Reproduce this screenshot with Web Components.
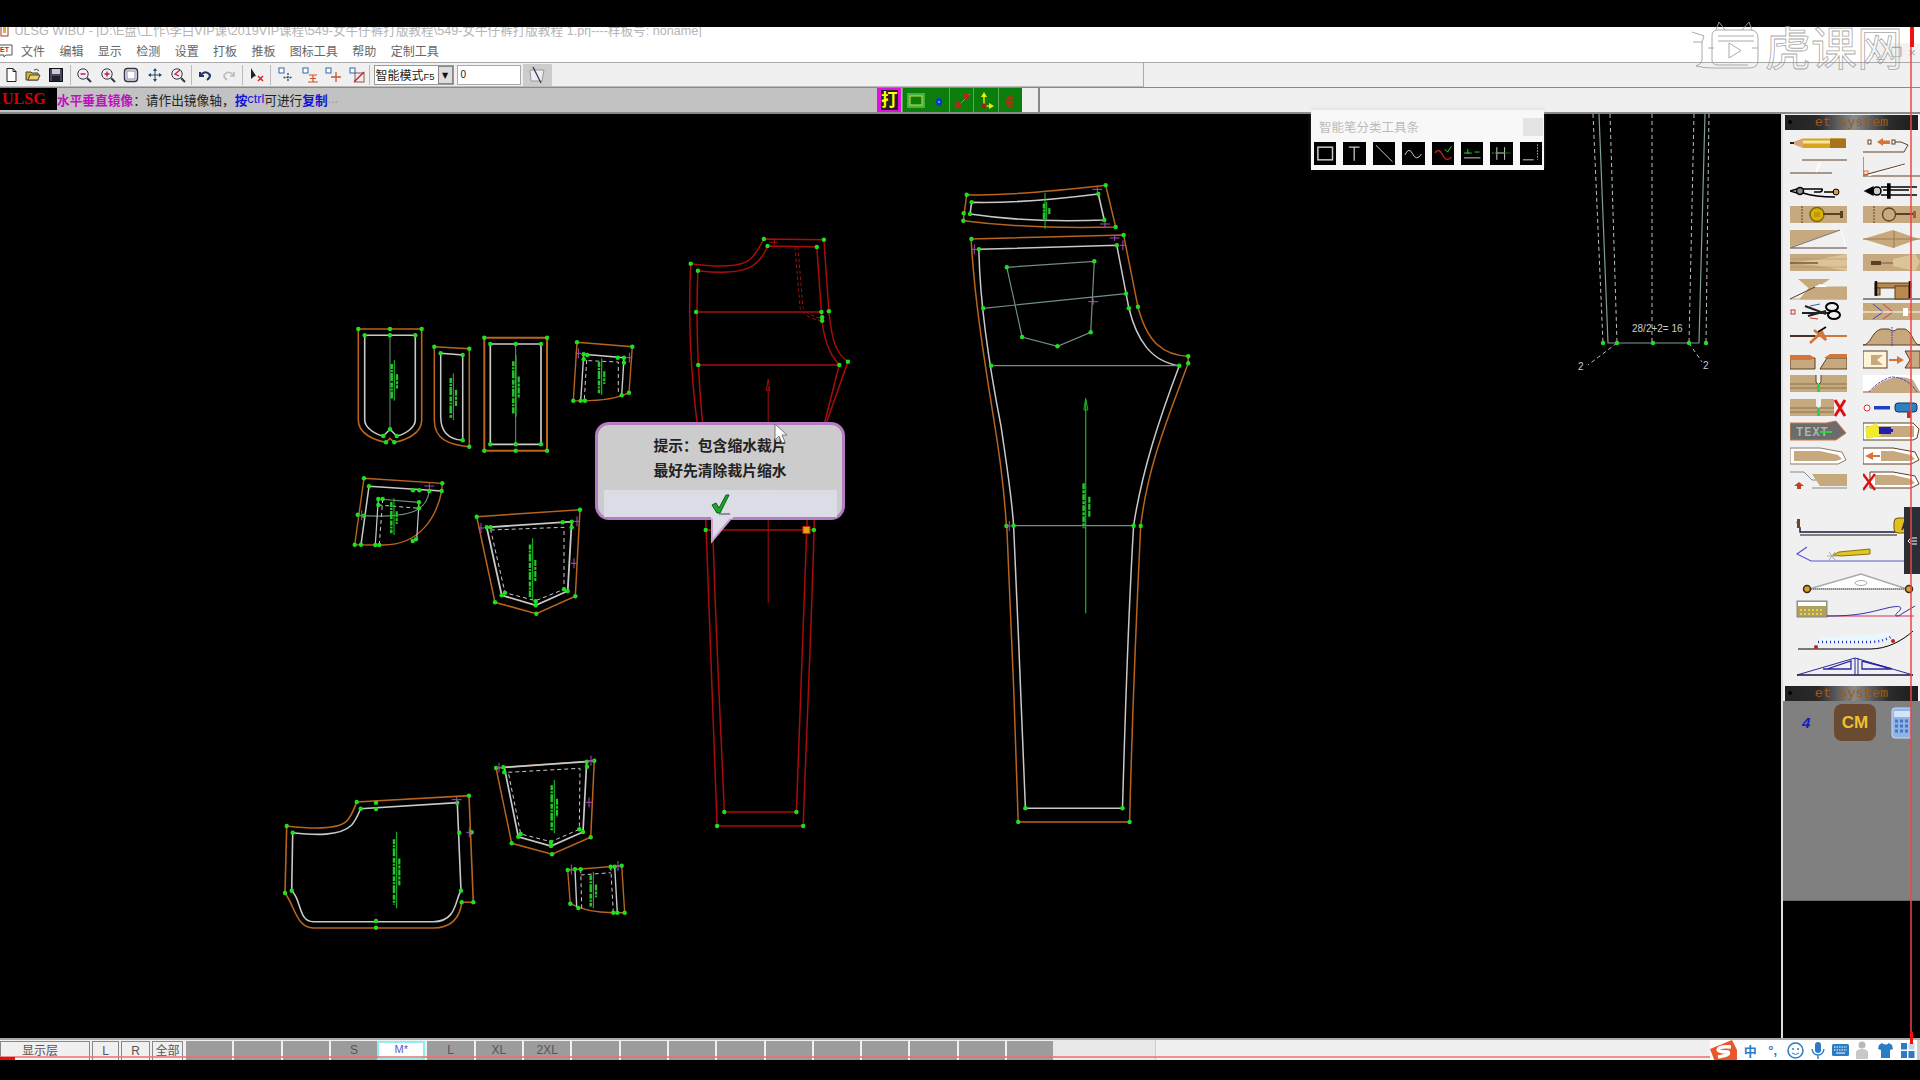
<!DOCTYPE html>
<html lang="zh"><head><meta charset="utf-8"><title>ULSG</title>
<style>html,body{margin:0;height:100%;background:#000}body{font-family:"Liberation Sans","Noto Sans CJK SC",sans-serif;overflow:hidden}</style>
</head><body>
<ulsg-app></ulsg-app>
<script>
const FONT='"Liberation Sans","Noto Sans CJK SC",sans-serif';
function def(name,render){customElements.define(name,class extends HTMLElement{connectedCallback(){if(this.shadowRoot)return;this.attachShadow({mode:'open'}).innerHTML=render(this);}});}

/* ---------- CAD drawing ---------- */
const view=(ox,oy,sx,sy=sx)=>{const f=(x,y)=>[ox+x/sx,oy+y/sy];
  const v=d=>d.replace(/(-?\d+\.?\d*) (-?\d+\.?\d*)/g,(m,x,y)=>{const p=f(+x,+y);return p[0].toFixed(1)+' '+p[1].toFixed(1)});
  v.pt=f;return v;};
const BROWN='#b8641c',WHITE='#c9c9c9',TEAL='#6f8f85',RED='#a80c0c',GR='#1fe01f',GRD='#1fae2a',MAG='#a84cc0';
function P(v,d,c,w=1.4,dash=''){return `<path d="${v(d)}" fill="none" stroke="${c}" stroke-width="${w}" ${dash?`stroke-dasharray="${dash}"`:''}/>`;}
function dots(v,a,c=GR){let s='';for(let i=0;i<a.length;i+=2){const p=v.pt(a[i],a[i+1]);s+=`<circle cx="${p[0].toFixed(1)}" cy="${p[1].toFixed(1)}" r="2.2" fill="${c}"/>`;}return s;}
function grain(v,x,y1,y2,c='#22c82a'){return P(v,`M${x} ${y1} L${x} ${y2}`,c,1)+P(v,`M${x-8} ${y1+(y2-y1)*.1} L${x-8} ${y2-(y2-y1)*.05}`,c,2.5,'5 1 2 1 8 1.5')+P(v,`M${x+8} ${y1+(y2-y1)*.35} L${x+8} ${y2-(y2-y1)*.3}`,c,2.2,'6 1 3 1');}
function tick(v,x,y,o='v',c=MAG){const p=v.pt(x,y),X=p[0],Y=p[1];return o==='v'?`<path d="M${X-3} ${Y}H${X+3}M${X} ${Y-5}V${Y+5}" stroke="${c}" fill="none"/>`:`<path d="M${X} ${Y-3}V${Y+3}M${X-5} ${Y}H${X+5}" stroke="${c}" fill="none"/>`;}
function cad(){
 let s='';
 const a=view(340,310,3),b=view(270,740,3),c=view(950,170,3),u=view(660,220,2.8,3),l=view(680,500,2.8,3);
 const D='4 3';
 // p1
 s+=P(a,'M55 57 L245 57 L245 330 C245 370 200 390 163 397 L150 385 L138 397 C100 390 55 370 55 330 Z',BROWN,1.6);
 s+=P(a,'M74 76 L226 76 L226 330 C226 350 200 372 170 378 L150 358 L130 378 C100 372 74 350 74 330 Z',WHITE,1.6);
 s+=P(a,'M150 76 L150 358',TEAL,1)+grain(a,163,150,272);
 s+=dots(a,[55,57,150,57,245,57,74,76,150,76,226,76,150,358,130,378,170,378,138,397,163,397]);
 // p2
 s+=P(a,'M283 110 L388 116 L388 410 C330 405 283 390 283 330 Z',BROWN,1.5);
 s+=P(a,'M302 130 L368 135 L368 391 C330 388 302 370 302 320 Z',WHITE,1.5);
 s+=grain(a,340,190,330)+dots(a,[283,110,388,116,388,410,302,130,368,135,368,391]);
 // p3
 s+=P(a,'M433 83 L621 83 L621 422 L433 422 Z',BROWN,2)+P(a,'M451 102 L603 102 L603 403 L451 403 Z',WHITE,1.7)+P(a,'M527 102 L527 403',TEAL,1)+grain(a,528,135,320);
 s+=dots(a,[433,83,621,83,433,422,527,422,621,422,451,102,527,102,603,102,451,403,527,403,603,403]);
 // p4
 s+=P(a,'M711 97 L877 110 L867 248 C840 262 790 275 700 272 Z',BROWN,1.4)+P(a,'M731 133 L852 143 L845 256 M722 272 L731 133',WHITE,1.4);
 s+=P(a,'M745 152 L835 156 L835 250 M740 150 L733 270',WHITE,1,D)+grain(a,785,145,255);
 s+=dots(a,[711,97,877,110,867,248,700,272,722,272,735,272,731,133,742,135,833,143,852,143,852,158,845,256,731,148])+tick(a,715,130,'v')+tick(a,868,143,'v');
 // p5
 s+=P(a,'M72 505 L307 520 L305 543 C290 620 240 705 130 705 L44 704 Z',BROWN,1.4)+P(a,'M87 529 L305 543 M87 529 L63 704',WHITE,1.5);
 s+=P(a,'M268 543 C260 600 220 625 60 617',TEAL,1.2)+P(a,'M115 567 L237 577',TEAL,1.2)+P(a,'M115 585 L237 595',WHITE,1,D)+P(a,'M115 567 L106 705 M237 577 L230 690',WHITE,1.2)+P(a,'M128 567 L118 705',WHITE,1,D);
 s+=grain(a,162,565,675)+dots(a,[72,505,307,520,87,529,219,541,238,541,305,543,268,543,115,567,128,567,237,577,237,595,115,585,53,614,72,617,44,704,63,704,106,705,118,705,218,693,228,688])+tick(a,65,616,'v')+tick(a,268,528,'h');
 // p6
 s+=P(a,'M410 620 L720 599 L706 859 L589 911 L465 877 Z',BROWN,1.5)+P(a,'M440 652 L695 635 L683 843 L587 886 L485 856 Z',WHITE,1.8)+P(a,'M452 660 L672 652 L672 838 L587 872 L495 848 Z',WHITE,1,D);
 s+=grain(a,578,685,870)+dots(a,[410,620,720,599,706,859,589,911,465,877,440,652,452,652,668,637,695,635,695,652,683,843,672,838,587,886,587,874,485,856,495,848])+tick(a,423,654,'v')+tick(a,711,634,'v')+tick(a,702,760,'v');
 // p7
 s+=P(b,'M50 258 C120 266 200 270 228 245 C245 230 252 205 260 186 L597 167 L610 487 L575 487 C570 530 550 563 490 564 L130 564 C80 564 75 500 45 459 Z',BROWN,1.6);
 s+=P(b,'M68 278 C130 285 210 290 245 255 C258 240 265 222 272 206 L562 188 L573 452 C555 480 560 545 490 545 L130 545 C85 545 95 480 65 452 Z',WHITE,1.6);
 s+=grain(b,380,275,505)+dots(b,[50,258,68,278,260,186,272,206,318,188,318,207,597,167,562,188,568,278,605,277,573,452,575,487,610,487,45,459,65,452,318,543,318,563])+tick(b,560,179,'h')+tick(b,598,277,'v');
 // p8
 s+=P(b,'M678 84 L973 62 L962 292 L846 343 L725 310 Z',BROWN,1.5)+P(b,'M703 82 L950 65 L939 276 L843 318 L745 290 Z',WHITE,1.7)+P(b,'M715 97 L930 85 L928 268 L843 305 L752 282 Z',WHITE,1,D);
 s+=grain(b,853,120,280)+dots(b,[678,84,973,62,962,292,846,343,725,310,700,82,703,97,950,65,951,80,939,276,928,268,843,318,843,306,745,290,752,282])+tick(b,687,83,'v')+tick(b,963,62,'v')+tick(b,957,187,'v');
 // p9
 s+=P(b,'M893 390 L1055 377 L1064 518 L1030 518 C980 518 935 510 901 491 Z',BROWN,1.4)+P(b,'M915 388 L920 500 M1034 380 L1042 518',WHITE,1.4)+P(b,'M932 388 L935 505 M1022 380 L1030 518 M932 405 L1022 398',WHITE,1,D);
 s+=grain(b,970,395,505)+dots(b,[893,390,915,388,932,388,1022,380,1034,380,1055,377,1064,518,1042,518,1030,518,901,491,925,504])+tick(b,904,389,'v')+tick(b,1044,378,'v');
 // waistband
 s+=P(c,'M50 74 C150 78 300 65 467 46 L497 171 C350 175 180 170 40 152 Z',BROWN,1.5)+P(c,'M65 97 C180 100 320 88 445 72 L463 150 C330 155 180 150 60 132 Z',WHITE,1.6);
 s+=P(c,'M285 68 L285 176','#22c82a',1)+grain(c,290,95,150)+dots(c,[50,74,467,46,497,171,40,152,41,130,65,97,445,72,463,150,60,132])+tick(c,442,58,'h')+tick(c,465,162,'h');
 // front leg
 s+=P(u,'M871 57 L1298 45 L1338 260 C1365 370 1410 405 1479 409 L1479 430 C1420 600 1365 740 1346 918',BROWN,1.5);
 s+=P(u,'M871 57 C880 230 905 400 935 600 C955 730 965 830 970 918',BROWN,1.5);
 s+=P(l,'M1290 78 C1280 300 1265 700 1259 966 L947 966 C940 700 925 300 915 78',BROWN,1.5);
 s+=P(u,'M893 88 L1279 76 L1313 265 C1335 360 1375 425 1454 437 C1400 590 1350 750 1326 917',WHITE,1.5);
 s+=P(u,'M893 88 C895 240 915 400 955 620 C970 730 985 830 990 917',WHITE,1.5);
 s+=P(l,'M1270 77 C1255 350 1245 700 1239 925 L967 925 C960 700 945 350 934 77',WHITE,1.5);
 s+=P(u,'M927 437 L1454 437 M905 265 L1305 221 M990 917 L1326 917 M971 142 L1216 124 L1206 337 L1113 379 L1014 351 Z',TEAL,1.2);
 s+=P(u,'M1192 540 L1192 1180',GRD,1.2)+P(u,'M1187 570 L1192 535 L1198 570 Z',GRD,1)+P(u,'M1186 790 L1186 925','#22c82a',2.5,'6 1 3 1')+P(u,'M1202 830 L1202 890','#22c82a',2.2,'6 1');
 s+=dots(u,[872,57,1298,45,893,88,1279,76,971,142,1216,124,1206,337,1113,379,1014,351,905,265,1305,221,1313,265,1338,260,1479,409,1479,430,1454,437,927,437,970,918,990,917,1326,917,1346,918]);
 s+=dots(l,[967,925,1239,925,947,966,1259,966]);
 s+=tick(u,880,88,'v')+tick(u,1273,54,'h')+tick(u,1296,76,'v')+tick(u,978,918,'v')+tick(u,1213,245,'h');
 // back leg
 s+=P(u,'M86 131 C150 140 230 145 255 115 C275 95 280 75 291 57 L459 59 L473 274 C480 350 490 400 526 425 L462 620',RED,1.5);
 s+=P(u,'M86 131 C78 300 85 450 105 620',RED,1.5);
 s+=P(l,'M376 60 C368 400 352 750 345 978 L104 978 C95 750 85 400 72 60',RED,1.5);
 s+=P(u,'M106 152 C170 160 240 160 268 130 C285 115 295 95 301 78 L439 81 L452 276 C455 340 470 400 502 434 L458 620',RED,1.5);
 s+=P(u,'M106 152 C100 300 105 450 120 620',RED,1.5);
 s+=P(l,'M356 60 C345 400 335 700 326 936 L124 936 C115 700 100 400 91 60',RED,1.5);
 s+=P(u,'M101 276 L452 276 M107 435 L502 435 M128 930 L431 930',RED,1.3);
 s+=P(u,'M303 500 L303 1150',RED,1)+P(u,'M298 512 L303 478 L308 512 Z',RED,1);
 s+=P(u,'M378 80 L392 262 C396 280 420 298 452 302 M386 80 L400 262 C404 275 425 290 452 295',RED,1,'3.5 2.5');
 s+=P(u,'M305 67 L330 67 M320 60 L320 74',RED,1);
 s+=dots(u,[86,131,106,152,291,57,301,78,459,59,439,81,101,276,452,276,473,274,454,292,454,302,107,435,502,435,526,425,128,930,431,930]);
 s+=dots(l,[124,936,326,936,104,978,345,978]);
 const q=u.pt(410,930);s+=`<rect x="${q[0]-3.5}" y="${q[1]-3.5}" width="7" height="7" fill="#e8a010" stroke="#c03010"/>`;
 // partial piece top right
 const T='#7f9f97',W='#b8c0bc';
 const id=d=>d;id.pt=(x,y)=>[x,y];
 s+=P(id,'M1599 114 L1608 343 L1699 343 L1705 114',T,1.2);
 s+=P(id,'M1593 114 L1603 343 M1610 114 L1617 343 M1652 114 L1652 343 M1694 114 L1689 343 M1709 114 L1706 343 M1617 343 L1588 365 M1689 343 L1702 362',W,1,'4 3');
 s+=dots(id,[1603,343,1617,343,1653,343,1689,343,1706,343]);
 return s;
}
def('cad-canvas',()=>`<style>:host{display:block;position:relative;flex:1;min-width:0;background:#000}svg{position:absolute;left:0;top:-114px;width:1781px;height:1080px;overflow:hidden}
text{font:10px "Liberation Sans",sans-serif;fill:#ccc}</style>
<svg viewBox="0 0 1781 1080">${cad()}<text x="1632" y="332">28/2+2= 16</text><text x="1578" y="370">2</text><text x="1703" y="369">2</text></svg><slot></slot>`);

/* ---------- small pieces ---------- */
def('title-bar',()=>`<style>:host{display:flex;height:10px;background:#fff;overflow:hidden;align-items:flex-start}
svg{flex:none;margin-top:-3px}span{font:12.6px/13px ${FONT};color:#b4b4b4;margin:-2px 0 0 5.5px;white-space:nowrap}</style>
<svg width="9" height="13" viewBox="0 0 9 13"><rect x="1" y="0" width="7" height="12" fill="#fff" stroke="#a33"/><rect x="3" y="3" width="3" height="6" fill="#e0b020"/></svg>
<span>ULSG WIBU - [D:\\E盘\\工作\\李白VIP课\\2019VIP课程\\549-女牛仔裤打版教程\\549-女牛仔裤打版教程 1.prj----样板号: noname]</span>`);

def('menu-bar',()=>`<style>:host{display:flex;height:23px;padding-top:2px;align-items:center;background:#fff;border-bottom:1px solid #aaa;font:12px ${FONT};color:#666;position:relative}
svg{flex:none;margin-right:8px}.m{display:flex;gap:14.4px}
.w{position:absolute;right:0;top:6px;display:flex}.w b{width:16px;height:19px;font:400 13px/19px "Liberation Sans","DejaVu Sans",sans-serif;text-align:center;color:#aaa;background:#f2f2f2;overflow:hidden}</style>
<svg width="13" height="14" viewBox="0 0 13 14"><path d="M0 1H12V11H6L4 13V11H0" fill="#fff" stroke="#555"/><text x="0" y="8" font-size="7" font-weight="700" fill="#c22" font-family="Liberation Sans">ET</text></svg>
<div class="m"><span>文件</span><span>编辑</span><span>显示</span><span>检测</span><span>设置</span><span>打板</span><span>推板</span><span>图标工具</span><span>帮助</span><span>定制工具</span></div>
<div class="w"><b>_</b><b>❐</b><b>×</b></div>`);

const tb={
 new:'<path d="M4 1.5H10L13 4.5V14.5H4Z" fill="#fff" stroke="#222"/><path d="M10 1.5V4.5H13" fill="none" stroke="#222"/>',
 open:'<path d="M1 5H6L7 6H13V13H1Z" fill="#d4b040" stroke="#443"/><path d="M3 13L5 8H15L13 13Z" fill="#e8d070" stroke="#443"/><path d="M9 3Q12 1 14 4" stroke="#443" fill="none"/>',
 save:'<rect x="1.5" y="1.5" width="13" height="13" fill="#446" stroke="#111"/><rect x="4" y="2" width="8" height="5" fill="#ccc"/><rect x="4" y="9" width="8" height="5" fill="#222"/>',
 zo:'<circle cx="7" cy="7" r="5.2" fill="#eef" stroke="#334"/><path d="M11 11L15 15" stroke="#334" stroke-width="2"/><path d="M4.5 7H9.5" stroke="#c22" stroke-width="1.5"/>',
 zi:'<circle cx="7" cy="7" r="5.2" fill="#eef" stroke="#334"/><path d="M11 11L15 15" stroke="#334" stroke-width="2"/><path d="M4.5 7H9.5M7 4.5V9.5" stroke="#c22" stroke-width="1.5"/>',
 fit:'<rect x="1.5" y="1.5" width="13" height="13" rx="3" fill="#eef" stroke="#334" stroke-width="1.4"/><rect x="4" y="4" width="8" height="8" fill="#fff" stroke="#88a"/>',
 pan:'<path d="M8 1L10 4H6ZM8 15L6 12H10ZM1 8L4 6V10ZM15 8L12 10V6Z" fill="#246"/><path d="M8 4V12M4 8H12" stroke="#246"/>',
 zp:'<circle cx="7" cy="7" r="5.2" fill="#eef" stroke="#334"/><path d="M11 11L15 15" stroke="#334" stroke-width="2"/><path d="M10 3L5 7L9 9" stroke="#c22" stroke-width="1.3" fill="none"/>',
 undo:'<path d="M3 5V9H7M3 9Q8 2 13 8Q13 11 10 13" stroke="#236" stroke-width="2" fill="none"/>',
 redo:'<path d="M13 5V9H9M13 9Q8 2 3 8Q3 11 6 13" stroke="#bbb" stroke-width="1.6" fill="none"/>',
 cur:'<path d="M2 1V12L5 9.5L7 9Z" fill="#222"/><path d="M9 9L14 14M14 9L9 14" stroke="#d22" stroke-width="1.5"/>',
 a:'<rect x="1" y="1" width="5" height="5" fill="#fff" stroke="#36a"/><path d="M10 6V15M5.5 10.5H14.5" stroke="#246" stroke-width="1.3" stroke-dasharray="2 1"/>',
 b:'<rect x="1" y="1" width="5" height="5" fill="#fff" stroke="#36a"/><path d="M7 8H15M11 8V15M8 11.5H14M6 15H16" stroke="#c52" stroke-width="1.2"/>',
 c:'<rect x="1" y="1" width="5" height="5" fill="#fff" stroke="#36a"/><path d="M11 5V15M6 10H16" stroke="#c52" stroke-width="1.3"/>',
 d:'<rect x="1" y="1" width="5" height="5" fill="#fff" stroke="#36a"/><rect x="6" y="6" width="9" height="9" fill="#eee" stroke="#855"/><path d="M5 15L15 5" stroke="#c22" stroke-width="1.4"/>'};
const ti=(k,w=23.6)=>`<i style="width:${w}px"><svg width="16" height="16" viewBox="0 0 16 16">${tb[k]}</svg></i>`;
def('tool-bar',()=>`<style>:host{display:flex;height:24px;background:#f0f0f0;position:relative}
.bar{display:flex;align-items:center;width:1144px;box-sizing:border-box;border-right:1px solid #aaa;border-bottom:1px solid #bbb;font:12px ${FONT}}
i{display:flex;justify-content:center;flex:none}u{width:1px;height:20px;background:#bbb;flex:none;margin:0 1px 0 1px}
.cb{width:80px;height:20px;margin-left:3px;box-sizing:border-box;background:#fff;border:1px solid #999;display:flex;align-items:center;justify-content:space-between;font-size:12px;color:#222;padding-left:1px;white-space:nowrap;overflow:hidden}
.cb small{font-size:9.5px}.cb b{width:15px;height:18px;background:#ddd;color:#111;font:8px/18px "DejaVu Sans";text-align:center;flex:none;border:1px solid #888;box-sizing:border-box}
.in{width:64px;height:20px;box-sizing:border-box;margin-left:3px;background:#fff;border:1px solid #aaa;font:10px/18px "Liberation Sans";padding-left:3px;color:#222}
.bt{width:29px;height:22px;background:#ccc;display:flex;align-items:center;justify-content:center;margin-left:2px}</style>
<div class="bar">${ti('new',21)}${ti('open')}${ti('save')}<u style="margin-left:2px;margin-right:1px"></u>${ti('zo')}${ti('zi')}${ti('fit')}${ti('pan')}${ti('zp')}<u></u>${ti('undo',24)}${ti('redo',24)}<u></u>${ti('cur',25)}<u style="margin-right:3px"></u>${ti('a')}${ti('b')}${ti('c')}${ti('d')}<u style="margin-left:0"></u>
<div class="cb"><span>智能模式<small>F5</small></span><b>▼</b></div><div class="in">0</div>
<div class="bt"><svg width="20" height="18" viewBox="0 0 20 18"><path d="M3 4H17L15 15H4Z" fill="#eee" stroke="#999"/><path d="M6 1L14 17" stroke="#336" stroke-width="1.2"/></svg></div></div>`);

def('status-row',()=>`<style>:host{display:flex;height:27px;background:#f0f0f0;border-bottom:2px solid #8a8a8a;box-sizing:border-box;border-top:1px solid #8a8a8a;position:relative}
.l{width:877px;background:#c2c2c2;display:flex;align-items:center;font:12.7px ${FONT};color:#222;white-space:nowrap;padding-bottom:2px;box-sizing:border-box}
.logo{width:57px;height:22px;background:#000;color:#d00;font:700 16px/22px "Liberation Serif",serif;box-sizing:border-box;padding-left:2px;flex:none}
.mg{color:#c010c0;font-weight:700}.bl{color:#1414d8;font-weight:700}.bn{color:#1414d8}.gy{color:#999}
.g{display:block;height:24px;flex:none;background:#0a7d0a;border-left:1px solid #5aa85a;box-sizing:border-box}
.end{width:16px;background:#eee;border-right:2px solid #888;border-top:1px solid #888;margin-top:-1px}</style>
<div class="l"><div class="logo">ULSG</div><span class="mg">水平垂直镜像</span><span>\uFF1A请作出镜像轴\uFF0C</span><span class="bl">按</span><span class="bn">ctrl</span><span>可进行</span><span class="bl">复制</span><span class="gy">...</span></div>
<span style="display:block;width:24.5px;height:24px;flex:none"><svg width="24.5" height="24" viewBox="0 0 24.5 24"><rect width="24.5" height="24" fill="#e010e0"/><rect x="4" y="2" width="17" height="20" fill="#222"/><text x="4" y="18" font-size="16.5" font-weight="700" fill="#ff0" font-family="Noto Sans CJK SC">打</text></svg></span>
<span class="g" style="width:47px"><svg width="47" height="24"><rect x="4" y="5" width="18" height="15" fill="#44b044"/><rect x="7" y="8" width="12" height="9" fill="#0a7d0a" stroke="#c8e040"/><ellipse cx="36" cy="14" rx="3" ry="4" fill="#1030e0"/><circle cx="36" cy="14" r="1" fill="#6cf"/></svg></span>
<span class="g" style="width:24.5px"><svg width="24" height="24"><path d="M6 20L20 6" stroke="#30c080"/><circle cx="16" cy="8" r="3" fill="#c02020"/><circle cx="8" cy="17" r="3" fill="#c02020"/></svg></span>
<span class="g" style="width:24.5px"><svg width="24" height="24"><path d="M10 8V18H18" stroke="#dd0" stroke-width="1.5" fill="none"/><path d="M10 4L7 9H13ZM20 18L15 15V21Z" fill="#ee0"/><circle cx="10" cy="18" r="2.5" fill="#a02020"/></svg></span>
<span class="g" style="width:24.5px"><svg width="24" height="24"><ellipse cx="11" cy="14" rx="4" ry="6" fill="#b03010"/><path d="M8 12H15M8 16H15" stroke="#0a7d0a"/></svg></span>
<div class="end"></div>`);

/* ---------- side panel icons ---------- */
const TAN='#c6a97e',DK='#5c3f22',OR='#d4763a',RD='#c02020';
const band=(extra='')=>`<rect x="0" y="3" width="57" height="17" fill="${TAN}"/>${extra}`;
const ic={
 pencil:`<path d="M1 12L13 7.5H54Q58 12 54 17H13Z" fill="#d8a41e"/><rect x="13" y="9.5" width="27" height="3" fill="#f8e69a"/><rect x="40" y="7.5" width="16" height="9.5" fill="#a8741a"/><path d="M1 12L13 7.5V17Z" fill="#d8a478"/><rect x="0" y="11" width="4" height="2" fill="#222"/>`,
 seam:`<rect x="5" y="9" width="3" height="4" fill="#fff" stroke="${DK}"/><path d="M14 11L20 7V9.5H27V13H20V15Z" fill="${OR}"/><rect x="29" y="9" width="3" height="4" fill="#fff" stroke="${DK}"/><path d="M32 11H38L45 14L41 21H0" fill="none" stroke="${DK}"/>`,
 lines:`<path d="M12 5H57M0 18H42" stroke="${DK}" stroke-width="1.2"/><path d="M26 17L30 8" stroke="#fff" stroke-width="2"/>`,
 angle:`<path d="M0 2V21H57" fill="none" stroke="${DK}"/><path d="M1 20L42 9" stroke="${DK}"/><rect x="1" y="16" width="4" height="4" fill="none" stroke="${OR}"/><path d="M5 21L42 10" stroke="#fff"/>`,
 compa:`<circle cx="10" cy="12" r="3.5" fill="#888" stroke="#000" stroke-width="1.5"/><circle cx="46" cy="13" r="3" fill="#d4a040" stroke="#000"/><path d="M0 12L7 10M0 12L7 14M13 10H32Q33 12 30 13H24M13 14Q25 18 45 18M34 13H44" stroke="#000" stroke-width="1.6" fill="none"/>`,
 compb:`<circle cx="14" cy="12" r="4" fill="#ccc" stroke="#000" stroke-width="1.6"/><path d="M2 12L10 8V16ZM18 8H54M18 16H54M20 11H46M24 19H27V5H24" stroke="#000" stroke-width="1.3" fill="#000"/>`,
 btnA:band(`<path d="M12 3V20" stroke="${DK}" stroke-dasharray="2 1"/><circle cx="27" cy="11.5" r="7" fill="#d8b400" stroke="#7a6a10" stroke-width="1.5"/><rect x="24" y="9" width="6" height="5" fill="#c09808"/><path d="M33 11H52" stroke="${DK}" stroke-width="2"/><rect x="50" y="8" width="3" height="7" fill="${DK}"/>`),
 btnB:band(`<path d="M11 3V20" stroke="${DK}" stroke-dasharray="2 1"/><circle cx="26" cy="11.5" r="6.5" fill="${TAN}" stroke="${DK}" stroke-width="1.3"/><path d="M32 11H51" stroke="${DK}" stroke-width="2"/><rect x="50" y="8" width="3" height="7" fill="#c85020"/>`),
 dartA:`<path d="M0 3H50L0 20Z" fill="${TAN}"/><path d="M50 3L0 21H57" stroke="#8a7a72" stroke-width="1.3" fill="none"/><path d="M51 3L56 20" stroke="#fff"/>`,
 dartB:`<path d="M0 12L30 3L56 12L30 21Z" fill="${TAN}"/><path d="M0 12H57M31 4V21" stroke="#a07850"/>`,
 wedgeA:band(`<path d="M0 12L30 8L57 3V20L30 15Z" fill="#dcc49a"/><path d="M0 12H28" stroke="${DK}" stroke-width="1.2"/><path d="M0 8H57M0 16H57" stroke="#a88a5c" stroke-opacity=".5"/>`),
 wedgeB:band(`<path d="M8 12H56" stroke="#7a5a3a" stroke-width="1"/><rect x="8" y="10" width="10" height="4" fill="${DK}"/><path d="M30 8L52 3L57 11L52 20L30 15Z" fill="#dcc49a"/>`),
 fold:`<path d="M0 23H57M10 23L20 11H57V23Z" fill="${TAN}" stroke="${TAN}"/><path d="M8 3H40L22 15Z" fill="${TAN}"/><path d="M20 13L30 8L38 11H24" fill="#fff"/><path d="M0 23L25 11" stroke="${DK}"/>`,
 sew:`<path d="M0 23H57" stroke="#222" stroke-width="1.2"/><rect x="12" y="7" width="36" height="5" fill="#b88a50" stroke="${DK}"/><rect x="32" y="10" width="14" height="13" fill="#b88a50" stroke="${DK}"/><rect x="12" y="12" width="5" height="7" fill="#b88a50" stroke="${DK}"/><path d="M13 5V20M47 5V22" stroke="#111" stroke-width="2.5"/>`,
 scis:`<rect x="1" y="10" width="4" height="4" fill="none" stroke="#c33" stroke-width="1"/><path d="M12 13H40M15 6L36 14M18 16L36 11" stroke="#222" stroke-width="2"/><ellipse cx="42" cy="7" rx="6" ry="4" fill="none" stroke="#000" stroke-width="2"/><ellipse cx="44" cy="15" rx="6" ry="4" fill="none" stroke="#000" stroke-width="2"/><path d="M20 18L28 19" stroke="#c33"/><path d="M20 6L30 4" stroke="#36a"/>`,
 chev:band(`<path d="M0 4L10 12L0 19" stroke="#c8a830" fill="none"/><path d="M10 4L20 12L10 19" stroke="#4040c0" fill="none"/><path d="M20 4L30 12L20 19" stroke="#c84050" fill="none"/><path d="M30 4L38 12L30 19" stroke="#60d0b0" fill="none"/><path d="M0 12H57" stroke="#fff"/><rect x="40" y="8" width="5" height="8" fill="#fff"/>`),
 knot:`<path d="M0 12H57" stroke="${OR}" stroke-width="2"/><path d="M0 12H25" stroke="#4a3020" stroke-width="2"/><path d="M20 19L32 8L36 16L24 6" stroke="${OR}" stroke-width="2.5" fill="none"/><path d="M28 8L36 3" stroke="#000" stroke-width="1.5"/>`,
 hill:`<path d="M0 21C8 21 8 8 18 5H26Q30 9 34 5H42C50 8 50 21 57 21Z" fill="${TAN}" stroke="${DK}"/><path d="M29 3V22" stroke="#3030d0" stroke-dasharray="1.5 1"/>`,
 cutA:`<path d="M0 10L25 10V21H0Z" fill="${TAN}" stroke="${DK}"/><path d="M0 7H20L25 10L20 12H0" fill="${OR}"/><path d="M30 21L37 10H57V21Z" fill="${TAN}" stroke="${DK}"/><path d="M34 10L40 6H57V10Z" fill="${OR}"/>`,
 cutB:`<rect x="0" y="3" width="24" height="17" fill="#fff3d8" stroke="${DK}"/><path d="M8 7L20 7L14 12L20 17H8Z" fill="${TAN}"/><path d="M26 11H34V8L41 12L34 16V13H26Z" fill="${OR}"/><path d="M42 3H57V20H42L47 12Z" fill="${TAN}" stroke="${DK}"/>`,
 notchA:band(`<path d="M0 12H57M0 16H57" stroke="#8a7048"/><path d="M26 3H31V10L29 12L26 10Z" fill="#f0f0f0"/><path d="M26 3V10L28 13L31 10V3" stroke="${DK}" fill="none"/><path d="M28.5 12V20" stroke="#30d040" stroke-width="3"/>`),
 curveA:`<rect y="3" width="57" height="17" fill="#fff"/><path d="M6 20Q28 -2 50 8L57 20Z" fill="${TAN}"/><path d="M0 20H57" stroke="${TAN}" stroke-width="2"/><path d="M6 20Q14 10 28 5Q44 5 54 20" stroke="#5040c0" fill="none" stroke-dasharray="3 1"/>`,
 notchX:`<rect y="3" width="44" height="17" fill="${TAN}"/><path d="M0 12H44M0 16H44" stroke="#8a7048"/><path d="M26 3H31V10L29 12L26 10Z" fill="#f0f0f0"/><path d="M28.5 12V20" stroke="#30d040" stroke-width="3"/><path d="M45 4L55 20M55 4L45 20" stroke="#e01010" stroke-width="3"/>`,
 drill:`<circle cx="4" cy="12" r="3" fill="#fff" stroke="#e03030"/><rect x="11" y="10" width="16" height="3.5" fill="#2040c0"/><rect x="32" y="7" width="22" height="9" rx="3" fill="#3080c0" stroke="#103060"/><rect x="44" y="15" width="4" height="7" fill="#c03020"/>`,
 text:`<path d="M0 3H36L46 1L56 13L46 20H0Z" fill="#6c6c6c" stroke="${OR}"/><text x="6" y="16" font-family="Liberation Mono,monospace" font-size="12" font-weight="700" fill="#a8b8a8" letter-spacing="1">TEXT</text><path d="M30 12H42" stroke="#30d040" stroke-width="2"/>`,
 bottle:`<path d="M0 3H50L56 9L54 18L50 20H0Z" fill="#fff" stroke="${DK}"/><rect x="3" y="6" width="48" height="11" fill="${TAN}"/><path d="M2 8L14 3L18 16L4 19Z" fill="#f0ea30"/><rect x="16" y="7" width="12" height="7" fill="#2020b0"/><rect x="27" y="9" width="3" height="3" fill="#2020b0"/>`,
 shapeA:`<path d="M0 4H30L52 8L56 16L48 20H0Z" fill="#fff" stroke="#8a7a6a"/><path d="M4 7H30L48 11L52 15L46 17H4Z" fill="${TAN}"/>`,
 shapeB:`<path d="M0 4H30L52 8L56 16L48 20H0Z" fill="#fff" stroke="${DK}"/><path d="M18 7H30L48 11L52 15L46 17H18Z" fill="${TAN}"/><path d="M2 12L10 8V11H17V13H10V16Z" fill="${OR}"/>`,
 shapeC:`<path d="M0 4H14L22 12H57M22 20H57" fill="none" stroke="#888"/><path d="M22 6H57V18H30Z" fill="${TAN}"/><path d="M9 14L14 18H11V21H7V18H4Z" fill="#c04020"/>`,
 shapeD:`<path d="M7 4H30L52 8L56 16L48 20H7Z" fill="#fff" stroke="${DK}"/><path d="M12 7H30L48 11L52 15L46 17H12Z" fill="${TAN}"/><path d="M0 22L12 6M0 6L12 22" stroke="#e01010" stroke-width="2.4"/>`};
def('tool-icon',h=>`<style>:host{display:block;width:57px;height:24.1px}svg{display:block}</style><svg width="57" height="24" viewBox="0 0 57 24">${ic[h.getAttribute('k')]}</svg>`);
const wd={
 ruler:`<path d="M0 4L3 10V14H100" stroke="#222" stroke-width="1.5" fill="none"/><rect x="0" y="1" width="3" height="9" fill="#6a4a20"/><path d="M3 14H100" stroke="#3030c0" stroke-dasharray="1 2"/><path d="M3 17H100" stroke="#111"/><rect x="97" y="0" width="22" height="15" rx="4" fill="#e0c020" stroke="#6a5a10"/><text x="104" y="12" font-size="10" font-weight="700" fill="#222" font-family="Liberation Sans">A</text>`,
 pen:`<path d="M10 1L0 8L14 15H118" stroke="#5858d0" fill="none" stroke-width="1.2"/><path d="M36 9L42 6L73 3V8L44 10Z" fill="#e0c820" stroke="#8a7010"/><path d="M32 6L38 14M38 6L32 14M30 10H40" stroke="#aaa"/>`,
 tri:`<path d="M8 15L60 0L106 15Z" fill="#fff" stroke="#aaa" stroke-width="1.5"/><ellipse cx="60" cy="9" rx="6" ry="2.5" fill="none" stroke="#aaa"/><path d="M8 15H106" stroke="#555" stroke-dasharray="1 1"/><circle cx="6" cy="15" r="3.5" fill="#d4a030" stroke="#3a2a10" stroke-width="1.5"/><circle cx="108" cy="15" r="3.5" fill="#d4a030" stroke="#3a2a10" stroke-width="1.5"/>`,
 lcd:`<rect x="0" y="0" width="30" height="16" fill="#b0a060" stroke="#888"/><rect x="1" y="1" width="28" height="4" fill="#fff"/><path d="M3 9H27M3 13H27" stroke="#e8d040" stroke-width="2" stroke-dasharray="2 2"/><path d="M30 15H117" stroke="#d03050" stroke-width="1"/><path d="M30 15C60 15 70 12 90 7C108 3 105 8 100 12C96 16 102 16 106 12L118 5" stroke="#3030b0" fill="none"/>`,
 ruler2:`<path d="M1 20H73C90 20 105 12 116 2" stroke="#000" fill="none"/><path d="M21 8V13C60 14 80 13 95 6V3Q60 9 21 8Z" fill="#e8f8ff"/><path d="M21 13H75Q88 12 95 7" stroke="#2030c0" fill="none" stroke-dasharray="1 3" stroke-width="2.5"/><circle cx="19" cy="18" r="2" fill="#c02020"/><circle cx="96" cy="12" r="2" fill="#c02020"/>`,
 tri2:`<path d="M0 18L58 1L116 18Z" fill="none" stroke="#2828a0"/><path d="M58 1V18M61 1V18" stroke="#2828a0"/><path d="M26 12H54V4L30 12M65 4V12H95L65 4" fill="none" stroke="#2828a0" stroke-width="1.3"/><path d="M0 18H116" stroke="#111"/>`};
def('wide-icon',h=>`<style>:host{display:block;height:27.7px;margin-left:${h.getAttribute('x')||0}px}svg{display:block;overflow:visible}</style><svg width="119" height="24" viewBox="0 0 119 24">${wd[h.getAttribute('k')]}</svg>`);
def('panel-head',()=>`<style>:host{display:block;height:15px;margin:1px 2px 0 2px;background:linear-gradient(90deg,#222 0,#2a2a2a 25%,#8a8a8a 52%,#2c2c2c 78%,#1c1c1c 100%);color:#a05a12;font:13.6px/15px "Liberation Mono",monospace;text-align:center;position:relative}
i{position:absolute;left:3px;top:5px;width:4px;height:4px;border-radius:50%;background:#000}</style><i></i><span>et system</span>`);

def('side-panel',()=>{const k=['pencil','seam','lines','angle','compa','compb','btnA','btnB','dartA','dartB','wedgeA','wedgeB','fold','sew','scis','chev','knot','hill','cutA','cutB','notchA','curveA','notchX','drill','text','bottle','shapeA','shapeB','shapeC','shapeD'];
 return `<style>:host{display:flex;flex-direction:column;width:139px;flex:none;box-sizing:border-box;border-left:2px solid #ddd;background:#000;overflow:hidden}
.top{height:587px;background:#f0f0f0;display:flex;flex-direction:column;flex:none;position:relative}
.grid{display:grid;grid-template-columns:57px 57px;column-gap:16px;margin:1px 0 0 7px}
.w{margin:26px 0 0 14px}.hd{margin-top:auto}
.g{height:200px;background:#808080;flex:none;border-bottom:1px solid #666;display:flex;align-items:center;position:relative;box-sizing:border-box}
.row{display:flex;align-items:center;align-self:flex-start;margin-top:3px;height:37px}
.four{width:32px;margin-left:19px;font:italic 700 15px "Liberation Sans",sans-serif;color:#1818c8}
.cm{width:42px;height:37px;margin-left:0;background:#6a4a30;border-radius:8px;color:#f0c030;font:700 17px/37px "Liberation Sans",sans-serif;text-align:center;flex:none}
svg{flex:none}</style>
<div class="top"><panel-head></panel-head><div class="grid">${k.map(x=>`<tool-icon k="${x}"></tool-icon>`).join('')}</div>
<div class="w"><wide-icon k="ruler"></wide-icon><wide-icon k="pen"></wide-icon><wide-icon k="tri" x="4"></wide-icon><wide-icon k="lcd"></wide-icon><wide-icon k="ruler2"></wide-icon><wide-icon k="tri2"></wide-icon></div>
<panel-head class="hd"></panel-head></div>
<div class="g"><div class="row"><div class="four">4</div><div class="cm">CM</div><svg width="20" height="32" viewBox="0 0 20 32" style="margin-left:15px"><rect x="1" y="1" width="22" height="30" rx="3" fill="#8fb4e8" stroke="#c8dcf6"/><rect x="3" y="4" width="16" height="6" fill="#d4e4f8"/><path d="M4 14H18M4 19H18M4 24H18" stroke="#4a74c0" stroke-width="3" stroke-dasharray="3 2"/></svg></div></div>`});

def('tip-bubble',()=>`<style>:host{position:absolute;left:595px;top:308px;width:250px;height:98px;box-sizing:border-box;border:3px solid #b57cc6;border-radius:14px;background:rgba(212,212,212,.96);font:700 14.8px/25px "Noto Sans CJK SC",sans-serif;color:#222;text-align:center}
.t{padding:7px 0 0 0}.b{position:absolute;left:6px;right:5px;bottom:0;height:27px;background:#dcdce6}
.tail{position:absolute;left:114px;top:92px;overflow:visible}</style>
<div class="t"><div>提示\uFF1A包含缩水裁片</div><div>最好先清除裁片缩水</div></div><div class="b"></div>
<svg class="tail" width="22" height="24" viewBox="0 0 22 24"><path d="M0 0V24L20 0" fill="#dcdce6" stroke="#c9a0d6" stroke-width="2"/><path d="M-1 0H21" stroke="#dcdce6" stroke-width="3"/></svg>`);
def('tip-check',()=>`<style>:host{position:absolute;left:711px;top:380px}svg{display:block}</style><svg width="20" height="22" viewBox="0 0 20 22"><path d="M1 11L5 9L8 14L15 1L18 1L9 19H6Z" fill="#1aa82a" stroke="#0a5a1a"/><path d="M8 20H19" stroke="#777" stroke-width="1.5"/></svg>`);
def('tool-float',()=>{const i=['<rect x="4" y="5" width="15" height="13" fill="none" stroke="#ccc" stroke-width="1.5"/>','<path d="M6 5H17M11.5 5V19" stroke="#ccc" stroke-width="1.3"/>','<path d="M3 3L20 20" stroke="#ccc"/>','<path d="M3 13Q7 4 11 12T20 12" stroke="#ccc" fill="none"/>','<path d="M3 11Q7 5 11 13T20 15" stroke="#c02020" fill="none" stroke-width="1.5"/><path d="M13 7L16 10L20 4" stroke="#2d2" fill="none"/>','<path d="M3 11H11M7 7V12M14 10H19" stroke="#2d2"/><path d="M3 16H20" stroke="#ccc"/>','<path d="M7 5V18M15 5V18M7 11H15" stroke="#ccc"/><path d="M2 11H21" stroke="#2a2" stroke-dasharray="2 1"/>','<path d="M3 18H14" stroke="#ccc"/><path d="M18 2V18" stroke="#2d2" stroke-dasharray="2 1"/>'];
 return `<style>:host{position:absolute;left:1311px;top:-4px;width:233px;height:60px;background:#f8f8f8;box-shadow:0 -2px 3px rgba(200,200,200,.3);font:12.5px ${FONT};color:#bbb}
.h{height:32px;display:flex;align-items:center;padding-left:8px;position:relative}.x{position:absolute;right:1px;top:8px;width:20px;height:18px;background:#e4e4e4}
.r{display:flex;gap:7px;padding-left:3px}.r svg{background:#000;display:block;flex:none}</style>
<div class="h">智能笔分类工具条<div class="x"></div></div><div class="r">${i.map(x=>`<svg width="22.4" height="23" viewBox="0 0 23 23">${x}</svg>`).join('')}</div>`});
def('mouse-arrow',()=>`<style>:host{position:absolute;left:774px;top:309px}svg{display:block}</style><svg width="14" height="22" viewBox="0 0 14 22"><path d="M1 1V17L5 13L8 20L11 19L8 12H13Z" fill="#fff" stroke="#777"/></svg>`);
def('side-tab',()=>`<style>:host{position:absolute;left:1904px;top:393px;width:16px;height:67px;background:#2b2e34;display:flex;align-items:center;justify-content:center}</style><svg width="10" height="10" viewBox="0 0 10 10"><path d="M1 5L4 2M1 5L4 8M5 2H10M3 5H10M5 8H10" stroke="#fff" fill="none"/></svg>`);

/* ---------- size bar ---------- */
def('size-bar',()=>{const lab=['','','','S','M*','L','XL','2XL'];let c='';for(let i=0;i<18;i++){const t=lab[i]||'';c+=`<div class="c${t==='M*'?' on':''}">${t}</div>`;}
 const blue='#2a7cc4';
 return `<style>:host{display:flex;height:22px;background:#f0f0f0;border-top:2px solid #aaa;box-sizing:border-box;font:12px ${FONT};color:#555;position:relative;overflow:hidden;align-items:stretch}
.k{background:#f0f0f0;border:1px solid #888;border-width:1px 1px 0 1px;margin-top:1px;box-sizing:border-box;text-align:center;line-height:19px;margin-right:2px;flex:none}
.cells{display:grid;grid-template-columns:repeat(18,48.3px);flex:none;margin:1px 0 0 1px}
.c{background:#9c9c9c;border-left:2px solid #f0f0f0;box-sizing:border-box;text-align:center;line-height:19px}
.on{background:#fff;border:2px solid #8eeeee;color:#5a5ad0;line-height:13px;font-size:11px}
.rest{width:102px;flex:none;background:#e8e8e8;border-right:1px solid #ccc}
.pad{flex:1}.ime{width:210px;flex:none;background:#fff;display:flex;align-items:center;position:relative;padding-left:27px;box-sizing:border-box;border-right:3px solid #ccc}
.s{position:absolute;left:0;top:0;width:27px;height:22px}.ime span{flex:none;width:22.5px;display:flex;justify-content:center;color:${blue};font-weight:700;font-size:13px}
.pink{position:absolute;left:0;width:1710px;top:16px;height:1.5px;background:rgba(238,110,110,.75)}.red{position:absolute;left:0;top:17px;width:15px;height:3px;background:#e01010}</style>
<div class="k" style="width:90px;padding-right:10px">显示层</div><div class="k" style="width:27px">L</div><div class="k" style="width:29px">R</div><div class="k" style="width:31px;margin-right:0">全部</div>
<div class="cells">${c}</div><div class="rest"></div><div class="pad"></div>
<div class="ime"><svg class="s" viewBox="0 0 27 22"><path d="M0 9L22 0L27 10V22H5Z" fill="#e8582a"/><path d="M21 7Q9 6 8 10Q8 12 18 12Q21 15 8 17" stroke="#fff" stroke-width="3.4" fill="none"/></svg>
<span style="margin-left:2px">中</span><span>°,</span>
<span><svg width="17" height="17" viewBox="0 0 17 17"><circle cx="8.5" cy="8.5" r="7.5" fill="none" stroke="${blue}" stroke-width="1.5"/><circle cx="6" cy="7" r="1" fill="${blue}"/><circle cx="11" cy="7" r="1" fill="${blue}"/><path d="M5 11Q8.5 14 12 11" stroke="${blue}" fill="none"/></svg></span>
<span><svg width="14" height="18" viewBox="0 0 14 18"><rect x="4" y="1" width="6" height="11" rx="3" fill="${blue}"/><path d="M1 8Q2 14 7 14Q12 14 13 8M7 14V18" stroke="${blue}" fill="none" stroke-width="1.4"/></svg></span>
<span><svg width="17" height="12" viewBox="0 0 17 12"><rect width="17" height="12" rx="1.5" fill="${blue}"/><path d="M2 3H15M2 6H15" stroke="#fff" stroke-dasharray="1.5 1"/><path d="M4 9H13" stroke="#fff"/></svg></span>
<span><svg width="15" height="18" viewBox="0 0 15 18"><circle cx="7" cy="4" r="3.5" fill="#b8b8b8"/><path d="M1 18V11Q2 8 7 8Q12 8 13 11V18Z" fill="#c8c8c8"/></svg></span>
<span><svg width="15" height="15" viewBox="0 0 15 15"><path d="M4 0L1 2L0 6L3 7V15H12V7L15 6L14 2L11 0Q7.5 3 4 0Z" fill="${blue}"/></svg></span>
<span><svg width="14" height="15" viewBox="0 0 14 15"><rect width="6" height="6.5" fill="${blue}"/><rect x="7.5" width="6" height="6.5" fill="#c8d8e8"/><rect y="8" width="6" height="7" fill="${blue}"/><rect x="7.5" y="8" width="6" height="7" fill="${blue}"/></svg></span></div>
<div class="pink"></div><div class="red"></div>`});

def('hu-watermark',()=>`<style>:host{position:absolute;left:1690px;top:22px;width:215px;height:47px;display:flex;pointer-events:none}
span{font:400 46px/46px "Noto Sans CJK SC",sans-serif;color:transparent;-webkit-text-stroke:.8px rgba(150,150,150,.85);white-space:nowrap;margin-left:-1px}
svg{flex:none}</style><svg width="76" height="47" viewBox="0 0 76 47" fill="none" stroke="#a0a0a0" stroke-width=".9"><path d="M2 10L14 14L12 20L3 20M12 20V38Q12 42 6 44Q14 46 22 46H60Q68 46 68 38V16Q68 8 60 8H28Q22 8 22 14V38Q22 43 28 43H58"/><path d="M26 8L29 0L35 8M52 8L59 0L62 8M28 14H64M28 19H64M18 26H24M62 26H68"/><path d="M39 21L51 28.5L39 36Z"/></svg><span>虎课网</span>`);
def('red-guide',()=>`<style>:host{position:absolute;left:1910px;top:27px;width:1.5px;height:1011px;background:rgba(240,70,70,.75)}i{position:absolute;left:0;top:0;width:4px;height:20px;background:#f01010}b{position:absolute;left:0;bottom:-6px;width:3px;height:12px;background:#f01010}</style><i></i><b></b>`);

def('ulsg-app',()=>`<style>:host{display:flex;flex-direction:column;width:1920px;height:1080px;background:#000;position:relative;overflow:hidden}
.top{height:27px;flex:none}.bot{height:20px;flex:none}.work{flex:1;display:flex;position:relative;min-height:0}</style>
<div class="top"></div><title-bar></title-bar><menu-bar></menu-bar><tool-bar></tool-bar><status-row></status-row>
<div class="work"><cad-canvas><tip-bubble></tip-bubble><tip-check></tip-check><mouse-arrow></mouse-arrow><tool-float></tool-float></cad-canvas><side-panel></side-panel><side-tab></side-tab></div>
<size-bar></size-bar><div class="bot"></div><hu-watermark></hu-watermark><red-guide></red-guide>`);
</script>
</body></html>
